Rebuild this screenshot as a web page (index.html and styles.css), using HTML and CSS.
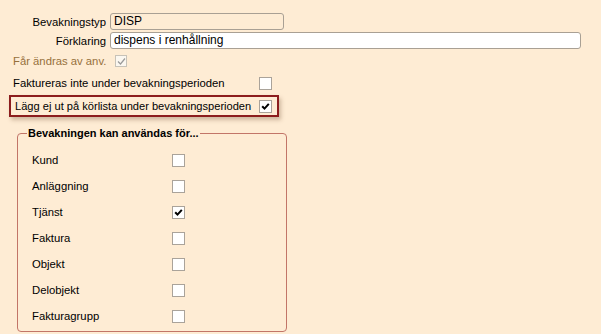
FILE: index.html
```html
<!DOCTYPE html>
<html lang="sv">
<head>
    <meta charset="UTF-8">
    <title>Bevakningstyp</title>
    <link rel="stylesheet" href="styles.css">
</head>
<body>
<div class="form">
    <div class="field">
        <label class="lbl">Bevakningstyp</label>
        <div class="input input-short">DISP</div>
    </div>
    <div class="field">
        <label class="lbl">Förklaring</label>
        <div class="input input-long">dispens i renhållning</div>
    </div>

    <div class="check-row row-edit">
        <span class="edit-text">Får ändras av anv.</span>
        <span class="cb cb-disabled"><svg width="9" height="9" viewBox="0 0 9 9"><path d="M1 4.5 L3.5 7 L8 1.5" fill="none" stroke="#9a9a9a" stroke-width="1.2"/></svg></span>
    </div>
    <div class="check-row row-wide">
        <span>Faktureras inte under bevakningsperioden</span>
        <span class="cb"></span>
    </div>
    <div class="check-row row-wide row-marked">
        <span>Lägg ej ut på körlista under bevakningsperioden</span>
        <span class="cb"><svg width="9" height="9" viewBox="0 0 9 9"><path d="M1.2 4.2 L3.5 6.6 L7.8 1.8" fill="none" stroke="#000" stroke-width="2"/></svg></span>
    </div>

    <fieldset class="group">
        <legend>Bevakningen kan användas för...</legend>
        <div class="item"><span>Kund</span><span class="cb"></span></div>
        <div class="item"><span>Anläggning</span><span class="cb"></span></div>
        <div class="item"><span>Tjänst</span><span class="cb"><svg width="9" height="9" viewBox="0 0 9 9"><path d="M1.2 4.2 L3.5 6.6 L7.8 1.8" fill="none" stroke="#000" stroke-width="2"/></svg></span></div>
        <div class="item"><span>Faktura</span><span class="cb"></span></div>
        <div class="item"><span>Objekt</span><span class="cb"></span></div>
        <div class="item"><span>Delobjekt</span><span class="cb"></span></div>
        <div class="item"><span>Fakturagrupp</span><span class="cb"></span></div>
    </fieldset>
</div>
</body>
</html>
```
FILE: styles.css
```css
html, body {
    margin: 0;
    padding: 0;
}

body {
    background: #feecd4;
    font-family: "Liberation Sans", Arial, sans-serif;
    font-size: 11.3px;
    color: #000;
}

.form {
    padding: 13px 0 0 0;
}

.field {
    display: flex;
    align-items: center;
    height: 17px;
    margin-bottom: 2px;
}

.lbl {
    width: 110px;
    text-align: right;
    padding-right: 4px;
    box-sizing: border-box;
}

.input {
    height: 17px;
    box-sizing: border-box;
    border: 1px solid #a9a094;
    border-radius: 3px;
    padding: 0 3px;
    line-height: 15px;
    font-size: 12px;
}

.input-short {
    width: 174px;
    background: #feecd4;
}

.input-long {
    width: 471px;
    background: #fff;
}

.check-row {
    display: flex;
    align-items: center;
    padding-left: 13px;
}

.row-edit {
    height: 12px;
    margin-top: 6px;
}

.edit-text {
    color: #96703c;
    width: 102px;
}

.row-wide {
    height: 14px;
    margin-top: 9px;
}

.row-wide > span:first-child {
    width: 246px;
}

.row-marked {
    width: 262px;
    height: 18px;
    margin: 5px 0 0 9px;
    padding-left: 4px;
    border: 2px solid #8c1d1d;
    box-shadow: 2px 3px 4px rgba(120, 90, 60, 0.35);
}

.row-marked > span:first-child {
    width: 244px;
    font-size: 11.1px;
}

.cb {
    width: 13px;
    height: 13px;
    box-sizing: border-box;
    border: 1px solid #aaa39a;
    background: #fff;
    display: flex;
    align-items: center;
    justify-content: center;
}

.cb-disabled {
    width: 12px;
    height: 12px;
    border-color: #c7c2b8;
    background: #fbf7f0;
}

.group {
    width: 270px;
    box-sizing: border-box;
    margin: 10px 0 0 17px;
    padding: 8px 0 0 14px;
    height: 205px;
    border: 1px solid #c27568;
    border-radius: 4px;
}

.group legend {
    font-weight: bold;
    font-size: 11px;
    padding: 0 1px;
    margin-left: -5px;
}

.item {
    display: flex;
    align-items: center;
    height: 26px;
}

.item > span:first-child {
    width: 140px;
}
```
